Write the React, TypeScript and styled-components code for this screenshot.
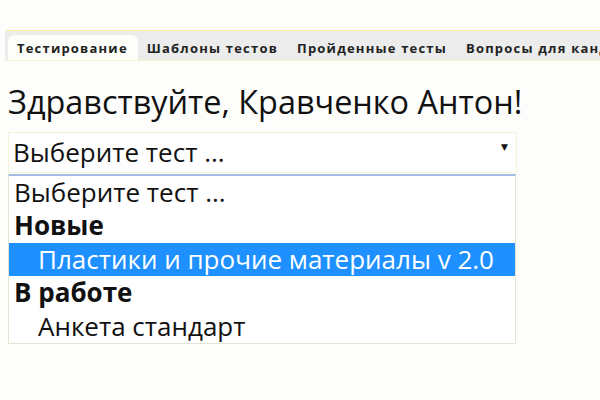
import React from 'react';
import styled, {createGlobalStyle} from "styled-components";

const GlobalStyle = createGlobalStyle`
  html, body {
    margin: 0;
    padding: 0;
    background: #fdfefb;
    font-family: "Open Sans", "DejaVu Sans", sans-serif;
    color: #111;
  }
`

const tabs = ["Тестирование", "Шаблоны тестов", "Пройденные тесты", "Вопросы для кандидатов"];

type OptionType = {
    label: string;
    kind: "plain" | "group" | "item";
    selected?: boolean;
}

const options: OptionType[] = [
    {label: "Выберите тест ...", kind: "plain"},
    {label: "Новые", kind: "group"},
    {label: "Пластики и прочие материалы v 2.0", kind: "item", selected: true},
    {label: "В работе", kind: "group"},
    {label: "Анкета стандарт", kind: "item"},
];

const App = () => {
    return (
        <Page>
            <GlobalStyle/>
            <TabBar>
                {tabs.map((t, i) => (
                    <Tab key={t} active={i === 0}>{t}</Tab>
                ))}
            </TabBar>

            <Content>
                <Greeting>Здравствуйте, Кравченко Антон!</Greeting>

                <SelectBox>
                    <SelectValue>Выберите тест ...</SelectValue>
                    <Arrow>▼</Arrow>
                </SelectBox>

                <DropList>
                    {options.map((o) => (
                        <Option key={o.label} kind={o.kind} selected={o.selected}>{o.label}</Option>
                    ))}
                </DropList>
            </Content>
        </Page>
    );
};

export default App;


const Page = styled.div`
  width: 600px;
  height: 400px;
  overflow: hidden;
  padding-top: 30px;
  box-sizing: border-box;
`

const TabBar = styled.div`
  margin-left: 5px;
  display: flex;
  align-items: flex-end;
  height: 31px;
  box-sizing: border-box;
  background: #ececec;
  border-top: 1px solid #f6f3a6;
  border-bottom: 1px solid #f6f3c8;
  padding-left: 3px;
  white-space: nowrap;
  overflow: hidden;
`

const Tab = styled.div<{ active?: boolean }>`
  flex-shrink: 0;
  height: 26px;
  line-height: 27px;
  padding: 0 10px 0 9px;
  font-size: 13px;
  font-weight: 700;
  letter-spacing: 1.2px;
  color: #222;
  background: ${props => props.active ? "#fdfef9" : "transparent"};
  border-radius: 6px 6px 0 0;
  margin-bottom: -1px;
`

const Content = styled.div`
  padding: 0 8px;
`

const Greeting = styled.h1`
  margin: 20px 0 11px;
  font-size: 32.4px;
  font-weight: 400;
  line-height: 40px;
  color: #111;
`

const SelectBox = styled.div`
  width: 509px;
  height: 41px;
  box-sizing: border-box;
  border: 1px solid #f3f3dc;
  background: #fff;
  display: flex;
  align-items: center;
  justify-content: space-between;
  padding: 0 8px 2px 4px;
`

const SelectValue = styled.span`
  font-size: 26px;
  color: #111;
`

const Arrow = styled.span`
  font-size: 9px;
  color: #111;
  margin-bottom: 10px;
`

const DropList = styled.div`
  margin-top: 1px;
  width: 508px;
  box-sizing: border-box;
  border: 1px solid #dfe6d6;
  border-top: 2px solid #a3bde2;
  background: #fff;
`

const Option = styled.div<{ kind: "plain" | "group" | "item"; selected?: boolean }>`
  height: 33.4px;
  line-height: 33px;
  font-size: 26px;
  padding-left: ${props => props.kind === "item" ? "29px" : "5px"};
  font-weight: ${props => props.kind === "group" ? 700 : 400};
  background: ${props => props.selected ? "#1e90ff" : "transparent"};
  color: ${props => props.selected ? "#fff" : "#111"};
  white-space: nowrap;
`
